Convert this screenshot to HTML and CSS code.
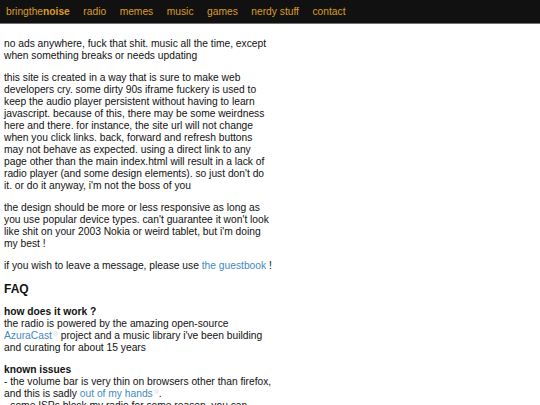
FILE: index.html
```html
<!DOCTYPE html>
<html lang="en">
<head>
    <meta charset="UTF-8">
    <meta name="viewport" content="width=device-width, initial-scale=1.0">
    <title>bringthenoise</title>
    <link rel="stylesheet" href="styles.css">
</head>
<body>
    <nav class="topbar">
        <a href="#">bringthe<b>noise</b></a>
        <a href="#">radio</a>
        <a href="#">memes</a>
        <a href="#">music</a>
        <a href="#">games</a>
        <a href="#">nerdy stuff</a>
        <a href="#">contact</a>
    </nav>

    <div class="content">
        <p>no ads anywhere, fuck that shit. music all the time, except when something breaks or needs updating</p>

        <p>this site is created in a way that is sure to make web developers cry. some dirty 90s iframe fuckery is used to keep the audio player persistent without having to learn javascript. because of this, there may be some weirdness here and there. for instance, the site url will not change when you click links. back, forward and refresh buttons may not behave as expected. using a direct link to any page other than the main index.html will result in a lack of radio player (and some design elements). so just don't do it. or do it anyway, i'm not the boss of you</p>

        <p>the design should be more or less responsive as long as you use popular device types. can't guarantee it won't look like shit on your 2003 Nokia or weird tablet, but i'm doing my best !</p>

        <p>if you wish to leave a message, please use <a href="#">the guestbook</a> !</p>

        <h2>FAQ</h2>

        <p><b>how does it work ?</b><br>
        the radio is powered by the amazing open-source <a href="#" class="ext">AzuraCast</a><svg class="ext-icon" viewBox="0 0 6 6"><circle cx="3" cy="3" r="2.2"/><path d="M2.4 3.6 L4.2 1.8"/></svg> project and a music library i've been building and curating for about 15 years</p>

        <p><b>known issues</b><br>
        - the volume bar is very thin on browsers other than firefox, and this is sadly <a href="#" class="ext">out of my hands</a><svg class="ext-icon" viewBox="0 0 6 6"><circle cx="3" cy="3" r="2.2"/><path d="M2.4 3.6 L4.2 1.8"/></svg>.<br>
        - some ISPs block my radio for some reason, you can circumvent this by using a VPN or another network</p>
    </div>
</body>
</html>
```

FILE: styles.css
```css
body {
    margin: 0;
    padding: 0;
    background: #fff;
    color: #111;
    font-family: 'Liberation Sans', Arial, sans-serif;
    font-size: 10.25px;
    line-height: 12px;
}

.topbar {
    display: flex;
    align-items: center;
    gap: 13.5px;
    height: 23px;
    padding: 0 6px;
    background: #111;
    border-bottom: 1px solid #707070;
}

.topbar a {
    color: #dc9d28; /* goldenrod-ish */
    text-decoration: none;
}

.content {
    width: 268px;
    padding: 4px 4px;
}

.content p {
    margin: 10px 0;
}

.content a {
    color: #3f8ac2;
    text-decoration: none;
}

h2 {
    font-size: 12px;
    line-height: 14px;
    margin: 10px 0;
}

.ext-icon {
    width: 5px;
    height: 5px;
    margin-left: 1px;
    vertical-align: 3px;
    fill: none;
    stroke: #c6d3dc;
    stroke-width: 0.7;
}
```
